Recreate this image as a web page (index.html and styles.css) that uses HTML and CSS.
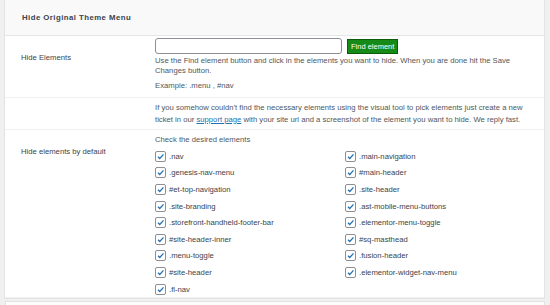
FILE: index.html
```html
<!DOCTYPE html>
<html lang="en">
<head>
  <meta charset="UTF-8">
  <meta name="viewport" content="width=device-width, initial-scale=1.0">
  <title>Hide Original Theme Menu</title>
  <link rel="stylesheet" href="styles.css">
</head>
<body>
  <div class="panel">
    <div class="panel-header">
      <h2>Hide Original Theme Menu</h2>
    </div>

    <div class="form-row row-find">
      <div class="row-label">Hide Elements</div>
      <div class="row-field">
        <div class="find-bar">
          <input type="text" class="find-input">
          <button class="find-btn">Find element</button>
        </div>
        <p class="desc">Use the Find element button and click in the elements you want to hide. When you are done hit the Save Changes button.</p>
        <p class="example">Example: .menu , #nav</p>
      </div>
    </div>

    <div class="form-row row-help">
      <div class="row-label"></div>
      <div class="row-field">
        <p class="help">If you somehow couldn't find the necessary elements using the visual tool to pick elements just create a new ticket in our <a href="#">support page</a> with your site url and a screenshot of the element you want to hide. We reply fast.</p>
      </div>
    </div>

    <div class="form-row row-defaults">
      <div class="row-label">Hide elements by default</div>
      <div class="row-field">
        <p class="check-title">Check the desired elements</p>
        <div class="check-grid">
          <label class="check"><span class="box"><svg viewBox="0 0 10 10"><path d="M2.2 5.2 L4.2 7.2 L8.3 2.6"/></svg></span>.nav</label>
          <label class="check"><span class="box"><svg viewBox="0 0 10 10"><path d="M2.2 5.2 L4.2 7.2 L8.3 2.6"/></svg></span>.main-navigation</label>
          <label class="check"><span class="box"><svg viewBox="0 0 10 10"><path d="M2.2 5.2 L4.2 7.2 L8.3 2.6"/></svg></span>.genesis-nav-menu</label>
          <label class="check"><span class="box"><svg viewBox="0 0 10 10"><path d="M2.2 5.2 L4.2 7.2 L8.3 2.6"/></svg></span>#main-header</label>
          <label class="check"><span class="box"><svg viewBox="0 0 10 10"><path d="M2.2 5.2 L4.2 7.2 L8.3 2.6"/></svg></span>#et-top-navigation</label>
          <label class="check"><span class="box"><svg viewBox="0 0 10 10"><path d="M2.2 5.2 L4.2 7.2 L8.3 2.6"/></svg></span>.site-header</label>
          <label class="check"><span class="box"><svg viewBox="0 0 10 10"><path d="M2.2 5.2 L4.2 7.2 L8.3 2.6"/></svg></span>.site-branding</label>
          <label class="check"><span class="box"><svg viewBox="0 0 10 10"><path d="M2.2 5.2 L4.2 7.2 L8.3 2.6"/></svg></span>.ast-mobile-menu-buttons</label>
          <label class="check"><span class="box"><svg viewBox="0 0 10 10"><path d="M2.2 5.2 L4.2 7.2 L8.3 2.6"/></svg></span>.storefront-handheld-footer-bar</label>
          <label class="check"><span class="box"><svg viewBox="0 0 10 10"><path d="M2.2 5.2 L4.2 7.2 L8.3 2.6"/></svg></span>.elementor-menu-toggle</label>
          <label class="check"><span class="box"><svg viewBox="0 0 10 10"><path d="M2.2 5.2 L4.2 7.2 L8.3 2.6"/></svg></span>#site-header-inner</label>
          <label class="check"><span class="box"><svg viewBox="0 0 10 10"><path d="M2.2 5.2 L4.2 7.2 L8.3 2.6"/></svg></span>#sq-masthead</label>
          <label class="check"><span class="box"><svg viewBox="0 0 10 10"><path d="M2.2 5.2 L4.2 7.2 L8.3 2.6"/></svg></span>.menu-toggle</label>
          <label class="check"><span class="box"><svg viewBox="0 0 10 10"><path d="M2.2 5.2 L4.2 7.2 L8.3 2.6"/></svg></span>.fusion-header</label>
          <label class="check"><span class="box"><svg viewBox="0 0 10 10"><path d="M2.2 5.2 L4.2 7.2 L8.3 2.6"/></svg></span>#site-header</label>
          <label class="check"><span class="box"><svg viewBox="0 0 10 10"><path d="M2.2 5.2 L4.2 7.2 L8.3 2.6"/></svg></span>.elementor-widget-nav-menu</label>
          <label class="check"><span class="box"><svg viewBox="0 0 10 10"><path d="M2.2 5.2 L4.2 7.2 L8.3 2.6"/></svg></span>.fl-nav</label>
        </div>
      </div>
    </div>
  </div>

  <div class="next-panel"></div>
</body>
</html>
```

FILE: styles.css
```css
html {
  height: 305px;
  overflow: hidden;
}

body {
  margin: 0;
  padding: 0 5px 0 4px;
  background-color: #f0f0f1;
  font-family: "Liberation Sans", Arial, sans-serif;
  font-size: 7.7px;
  color: #50575e;
  height: 305px;
  overflow: hidden;
}

p {
  margin: 0;
}

.panel {
  background-color: #fff;
  border: 1px solid #e3e3e3;
  border-top: none;
}

.panel-header {
  height: 35px;
  background-color: #f9f9f9;
  border-bottom: 1px solid #e6e6e6;
  display: flex;
  align-items: center;
  padding-left: 17px;
}

.panel-header h2 {
  margin: 0;
  font-size: 7.8px;
  font-weight: bold;
  letter-spacing: 0.45px;
  color: #3c434a;
}

.form-row {
  display: grid;
  grid-template-columns: 150px 1fr;
  border-bottom: 1px solid #f0f0f1;
}

.row-label {
  padding-left: 16px;
  color: #3c434a;
  line-height: 10px;
}

.row-field {
  padding-right: 12px;
}

/* find elements row */
.row-find {
  height: 61px;
}

.row-find .row-label {
  padding-top: 17px;
}

.find-bar {
  display: flex;
  gap: 5px;
  padding-top: 2px;
}

.find-input {
  width: 187px;
  height: 16px;
  box-sizing: border-box;
  border: 1px solid #8c8f94;
  border-radius: 3px;
  margin: 0;
  padding: 0 4px;
}

.find-btn {
  height: 15px;
  margin-top: 1px;
  padding: 0 3px;
  border: 1px solid #0b5c0b;
  background-color: #168a16;
  color: #fff;
  font-family: "Liberation Sans", Arial, sans-serif;
  font-size: 7.5px;
  line-height: 13px;
}

.desc {
  margin-top: 2px;
  line-height: 10px;
}

.example {
  margin-top: 5px;
  line-height: 10px;
}

/* help row */
.row-help .row-field {
  padding-top: 4px;
  padding-bottom: 4px;
}

.help {
  line-height: 11.5px;
}

.help a {
  color: #2271b1;
}

/* default elements row */
.row-defaults {
  height: 167px;
}

.row-defaults .row-label {
  padding-top: 17px;
}

.check-title {
  padding-top: 5px;
  line-height: 10px;
}

.check-grid {
  display: grid;
  grid-template-columns: 190px 1fr;
  grid-auto-rows: 16.6px;
  padding-top: 3px;
}

.check {
  display: flex;
  align-items: center;
  gap: 3px;
  color: #3c434a;
}

.box {
  width: 9px;
  height: 9px;
  border: 1px solid #8c8f94;
  border-radius: 2px;
  background-color: #fff;
  display: flex;
}

.box svg {
  width: 9px;
  height: 9px;
  fill: none;
  stroke: #2271b1;
  stroke-width: 1.4;
}

.next-panel {
  margin-top: 2px;
  margin-left: 1px;
  height: 3px;
  background-color: #fcfcfc;
  border: 1px solid #e3e3e3;
  border-bottom: none;
}
```
